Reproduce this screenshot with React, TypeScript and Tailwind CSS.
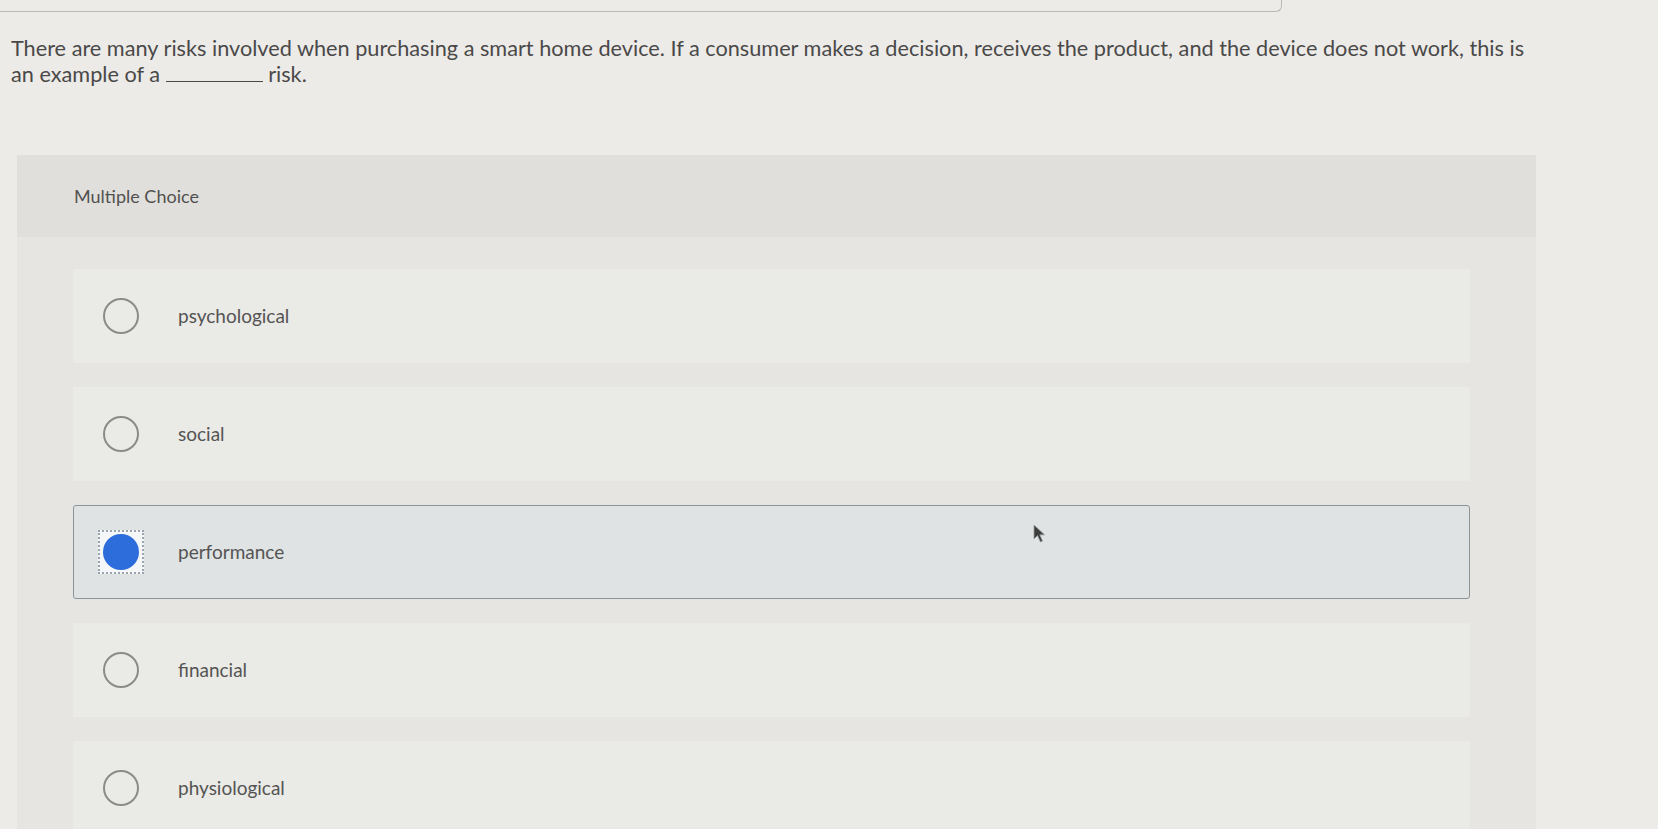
const options = ["psychological", "social", "performance", "financial", "physiological"];
const selected = "performance";

function Radio({ checked }: { checked: boolean }) {
  if (checked) {
    return (
      <div className="flex h-[44px] w-[46px] items-center justify-center border-2 border-dotted border-[#9aa3ad] bg-[#f4f6f8]">
        <div className="h-[36px] w-[36px] rounded-full bg-[#2c6ddb]" />
      </div>
    );
  }
  return <div className="ml-[5px] h-[36px] w-[36px] rounded-full border-2 border-[#8c8b8a]" />;
}

// plain arrow cursor sitting over the page
function Cursor() {
  return (
    <svg className="absolute top-[524px] left-[1033px]" width="13" height="19" viewBox="0 0 13 19">
      <path
        d="M1 1 L1 15 L4.5 11.5 L7.5 18 L9.5 17 L6.8 10.8 L11.5 10.8 Z"
        fill="#3d3d3d"
        stroke="#9a9a9a"
        strokeWidth="0.8"
        strokeLinejoin="round"
      />
    </svg>
  );
}

export default function App() {
  return (
    <div
      className="relative h-[829px] w-full overflow-hidden bg-[#ecebe8] text-[#4a4948]"
      style={{ fontFamily: "Lato, 'Open Sans', sans-serif" }}
    >
      {/* bottom edge of the box above */}
      <div className="h-[12px] w-[1282px] rounded-br-[6px] border-r border-b border-[#b9b8b5]" />

      <p className="mt-[23px] pl-[11px] text-[21.7px] leading-[26px]">
        There are many risks involved when purchasing a smart home device. If a consumer makes a
        decision, receives the product, and the device does not work, this is
        <br />
        an example of a <span className="inline-block w-[97px] border-b border-[#4a4948] align-baseline" /> risk.
      </p>

      <div className="mt-[68px] ml-[17px] w-[1519px] bg-[#e6e5e2]">
        <div className="flex h-[82px] items-center bg-[#e0dfdc] pl-[57px] text-[18px] text-[#525150]">
          Multiple Choice
        </div>

        <div className="flex flex-col gap-[24px] pt-[32px] pr-[66px] pb-[40px] pl-[56px]">
          {options.map((o) => {
            const checked = o === selected;
            return (
              <div
                key={o}
                className={
                  checked
                    ? "flex h-[94px] items-center rounded-[3px] border border-[#8e9396] bg-[#dfe3e4] pl-[24px]"
                    : "flex h-[94px] items-center bg-[#eaeae7] pl-[25px]"
                }
              >
                <div className="w-[46px]">
                  <Radio checked={checked} />
                </div>
                <span className="ml-[34px] text-[19px] text-[#555453]">{o}</span>
              </div>
            );
          })}
        </div>
      </div>

      <Cursor />
    </div>
  );
}
